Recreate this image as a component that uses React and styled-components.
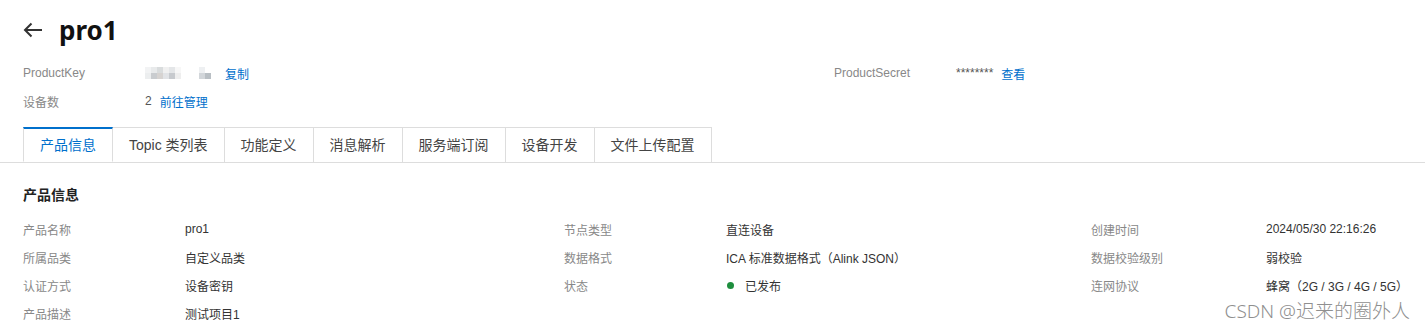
import React from 'react';
import styled, { createGlobalStyle } from 'styled-components';

const GlobalStyle = createGlobalStyle`
  body {
    margin: 0;
    background: #fff;
    font-family: "Liberation Sans", "Noto Sans CJK SC", sans-serif;
    color: #333;
  }
`;

const Page = styled.div`
  position: relative;
  width: 1425px;
  height: 330px;
  overflow: hidden;
  padding-top: 14px;
  box-sizing: border-box;
`;

const TitleBar = styled.div`
  display: flex;
  align-items: center;
  gap: 16px;
  padding-left: 23px;
  height: 32px;
`;

const Title = styled.h1`
  margin: 0;
  font-family: "Noto Sans", sans-serif;
  font-size: 26px;
  font-weight: 700;
  color: #111;
  line-height: 32px;
`;

const Meta = styled.div`
  display: grid;
  grid-template-columns: 811px 1fr;
  padding-left: 23px;
  margin-top: 13px;
`;

const MetaItem = styled.div`
  display: grid;
  grid-template-columns: 122px 1fr;
  height: 28px;
  align-items: center;
  font-size: 12px;
`;

const MetaLabel = styled.span`
  color: #888;
`;

const MetaValue = styled.span`
  display: flex;
  align-items: center;
  gap: 8px;
  color: #555;
`;

const Link = styled.a`
  color: #0070cc;
  cursor: pointer;
`;

const Blur = styled.span`
  display: grid;
  grid-template-columns: repeat(12, 6px);
  grid-template-rows: repeat(2, 6px);
`;

const Px = styled.span`
  background: ${p => p.c};
`;

const Tabs = styled.div`
  display: flex;
  margin: 12px 0 0;
  padding-left: 23px;
  border-bottom: 1px solid #ddd;
  height: 35px;
`;

const Tab = styled.div`
  padding: 0 16px;
  font-size: 14px;
  line-height: ${p => (p.active ? '33px' : '34px')};
  color: ${p => (p.active ? '#0070cc' : '#444')};
  border: 1px solid #ddd;
  border-left: ${p => (p.first ? '1px solid #ddd' : 'none')};
  border-top: ${p => (p.active ? '2px solid #0070cc' : '1px solid #ddd')};
  border-bottom: ${p => (p.active ? '1px solid #fff' : 'none')};
  background: #fff;
  white-space: nowrap;
`;

const SectionTitle = styled.h2`
  margin: 22px 0 0;
  padding-left: 23px;
  font-size: 14px;
  font-weight: 700;
  color: #222;
  line-height: 20px;
`;

const Details = styled.div`
  display: grid;
  grid-template-columns: 541px 527px 1fr;
  grid-auto-rows: 28px;
  padding-left: 23px;
  margin-top: 10px;
`;

const Field = styled.div`
  display: grid;
  grid-template-columns: ${p => p.labelWidth}px 1fr;
  align-items: center;
  font-size: 12px;
`;

const FieldLabel = styled.span`
  color: #888;
`;

const FieldValue = styled.span`
  display: flex;
  align-items: center;
  gap: 8px;
  color: #333;
`;

const Dot = styled.span`
  width: 7px;
  height: 7px;
  border-radius: 50%;
  background: #1e8e3e;
  margin-left: 1px;
  margin-right: 3px;
`;

const Watermark = styled.div`
  position: absolute;
  right: 15px;
  bottom: 6px;
  font-family: "Noto Sans", "Noto Sans CJK SC", sans-serif;
  font-size: 19px;
  font-weight: 300;
  color: #8f8f8f;
  text-shadow: 0 0 2px #fff;
`;

const BackArrow = () => (
  <svg width="20" height="16" viewBox="0 0 20 16" fill="none" stroke="#333" strokeWidth="2">
    <path d="M19 8H2" />
    <path d="M8.5 1.5L2 8l6.5 6.5" />
  </svg>
);

const blurPx = [
  '#f2f3f4', '#e8eaeb', '#d9dcdd', '#f0f0f0', '#e4e6e8', '#f7f7f7', '#fff', '#fff', '#fff', '#eef0f2', '#fff', '#fff',
  '#eceeef', '#c9cccf', '#d6d3d1', '#e1e3e6', '#c7cace', '#eeeeee', '#fff', '#fff', '#fff', '#d2d6da', '#b9bfc4', '#fff',
];

const tabs = ['产品信息', 'Topic 类列表', '功能定义', '消息解析', '服务端订阅', '设备开发', '文件上传配置'];

const rows = [
  [['产品名称', 'pro1'], ['节点类型', '直连设备'], ['创建时间', '2024/05/30 22:16:26']],
  [['所属品类', '自定义品类'], ['数据格式', 'ICA 标准数据格式（Alink JSON）'], ['数据校验级别', '弱校验']],
  [['认证方式', '设备密钥'], ['状态', 'status'], ['连网协议', '蜂窝（2G / 3G / 4G / 5G）']],
  [['产品描述', '测试项目1'], null, null],
];

const labelWidths = [162, 162, 175];

export default function App() {
  return (
    <Page>
      <GlobalStyle />
      <TitleBar>
        <BackArrow />
        <Title>pro1</Title>
      </TitleBar>
      <Meta>
        <MetaItem>
          <MetaLabel>ProductKey</MetaLabel>
          <MetaValue>
            <Blur>
              {blurPx.map((c, i) => <Px key={i} c={c} />)}
            </Blur>
            <Link>复制</Link>
          </MetaValue>
        </MetaItem>
        <MetaItem>
          <MetaLabel>ProductSecret</MetaLabel>
          <MetaValue>
            ********
            <Link>查看</Link>
          </MetaValue>
        </MetaItem>
        <MetaItem>
          <MetaLabel>设备数</MetaLabel>
          <MetaValue>
            2
            <Link>前往管理</Link>
          </MetaValue>
        </MetaItem>
      </Meta>
      <Tabs>
        {tabs.map((t, i) => (
          <Tab key={t} first={i === 0} active={i === 0}>{t}</Tab>
        ))}
      </Tabs>
      <SectionTitle>产品信息</SectionTitle>
      <Details>
        {rows.flatMap((row, r) =>
          row.map((cell, c) => (
            <Field key={`${r}-${c}`} labelWidth={labelWidths[c]}>
              {cell && <FieldLabel>{cell[0]}</FieldLabel>}
              {cell && (
                <FieldValue>
                  {cell[1] === 'status' ? (<><Dot />已发布</>) : cell[1]}
                </FieldValue>
              )}
            </Field>
          ))
        )}
      </Details>
      <Watermark>CSDN @迟来的圈外人</Watermark>
    </Page>
  );
}
